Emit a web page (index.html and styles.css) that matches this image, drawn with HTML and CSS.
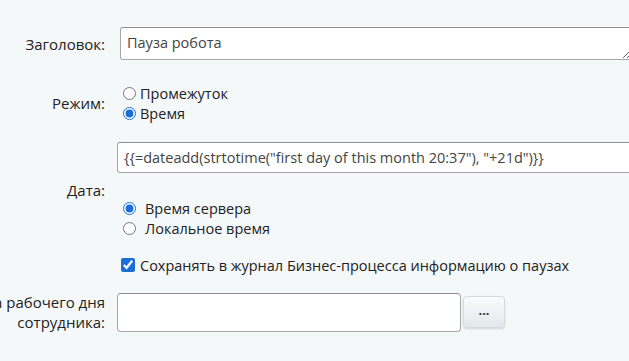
FILE: index.html
```html
<!DOCTYPE html>
<html lang="ru">
<head>
    <meta charset="UTF-8">
    <title>Пауза робота</title>
    <link rel="stylesheet" href="styles.css">
</head>
<body>
    <form class="settings">
        <div class="label row-title">Заголовок:</div>
        <div class="field row-title">
            <textarea class="title-input" rows="1">Пауза робота</textarea>
        </div>

        <div class="label row-mode">Режим:</div>
        <div class="field row-mode">
            <label class="option"><input type="radio" name="mode"> Промежуток</label>
            <label class="option"><input type="radio" name="mode" checked> Время</label>
        </div>

        <div class="label row-date">Дата:</div>
        <div class="field row-date">
            <input type="text" class="text-input wide" value='{{=dateadd(strtotime("first day of this month 20:37"), "+21d")}}'>
            <div class="time-options">
                <label class="option"><input type="radio" name="tz" checked> Время сервера</label>
                <label class="option"><input type="radio" name="tz"> Локальное время</label>
            </div>
        </div>

        <div class="label row-check"></div>
        <div class="field row-check">
            <label class="option check"><input type="checkbox" checked> Сохранять в журнал Бизнес-процесса информацию о паузах</label>
        </div>

        <div class="label row-user">
            <span>Время начала рабочего дня</span>
            <span>сотрудника:</span>
        </div>
        <div class="field field-user row-user">
            <input type="text" class="text-input user-input">
            <button type="button" class="dots-btn">...</button>
        </div>
    </form>
</body>
</html>
```

FILE: styles.css
```css
html, body {
    margin: 0;
    padding: 0;
    overflow: hidden;
}
body {
    font-family: "Open Sans", "Noto Sans", sans-serif;
    font-size: 14.5px;
    color: #222;
    background-color: #f5f8f9;
    width: 629px;
    height: 361px;
}
.settings {
    display: grid;
    grid-template-columns: 105px 520px;
    column-gap: 12px;
    align-items: center;
    padding-top: 27px;
}
.label {
    display: flex;
    flex-direction: column;
    align-items: flex-end;
    white-space: nowrap;
    font-size: 15px;
    line-height: 20px;
}
.field {
    min-width: 0;
}

/* отступы строк: одинаковые для подписи и поля, чтобы подпись была по центру */
.row-mode {
    margin-top: 23px;
}
.row-date {
    margin-top: 19px;
}
.row-check {
    margin-top: 17px;
}
.row-user {
    margin-top: 17px;
}

.title-input {
    display: block;
    box-sizing: border-box;
    width: 512px;
    height: 33px;
    margin-left: 3px;
    padding: 5px 6px;
    font-family: inherit;
    font-size: 14.5px;
    line-height: 20px;
    color: #444;
    background: white;
    border: 1px solid #a3a7ab;
    border-top-color: #8c9096;
    border-radius: 3px;
    resize: vertical;
    overflow: hidden;
}
.option {
    display: flex;
    align-items: center;
    height: 20px;
    white-space: nowrap;
}
.option input {
    accent-color: #1a6ed8;
    margin: 0 4px 0 6px;
}
.text-input {
    display: block;
    box-sizing: border-box;
    height: 31px;
    padding: 4px 6px;
    font-family: inherit;
    font-size: 14.5px;
    color: #444;
    background: white;
    border: 1px solid #a3a7ab;
    border-top-color: #8c9096;
    border-radius: 3px;
}
.wide {
    width: 520px;
}
.time-options {
    padding-top: 25px;
}
.time-options .option input {
    margin-right: 9px;
}
.check input {
    width: 14px;
    height: 14px;
    margin: 0 5px 0 4px;
}
.field-user {
    display: flex;
    align-items: center;
    gap: 2px;
}
.user-input {
    width: 344px;
    height: 39px;
    border-radius: 4px;
}
.dots-btn {
    width: 42px;
    height: 32px;
    padding: 0 0 4px;
    font-family: inherit;
    font-size: 13px;
    font-weight: bold;
    color: #333;
    background: linear-gradient(#f9fbfc, #e3e8eb);
    border: 1px solid #d5dade;
    border-radius: 4px;
    box-shadow: 0 1px 2px rgba(0, 0, 0, 0.15);
    cursor: pointer;
}
```
